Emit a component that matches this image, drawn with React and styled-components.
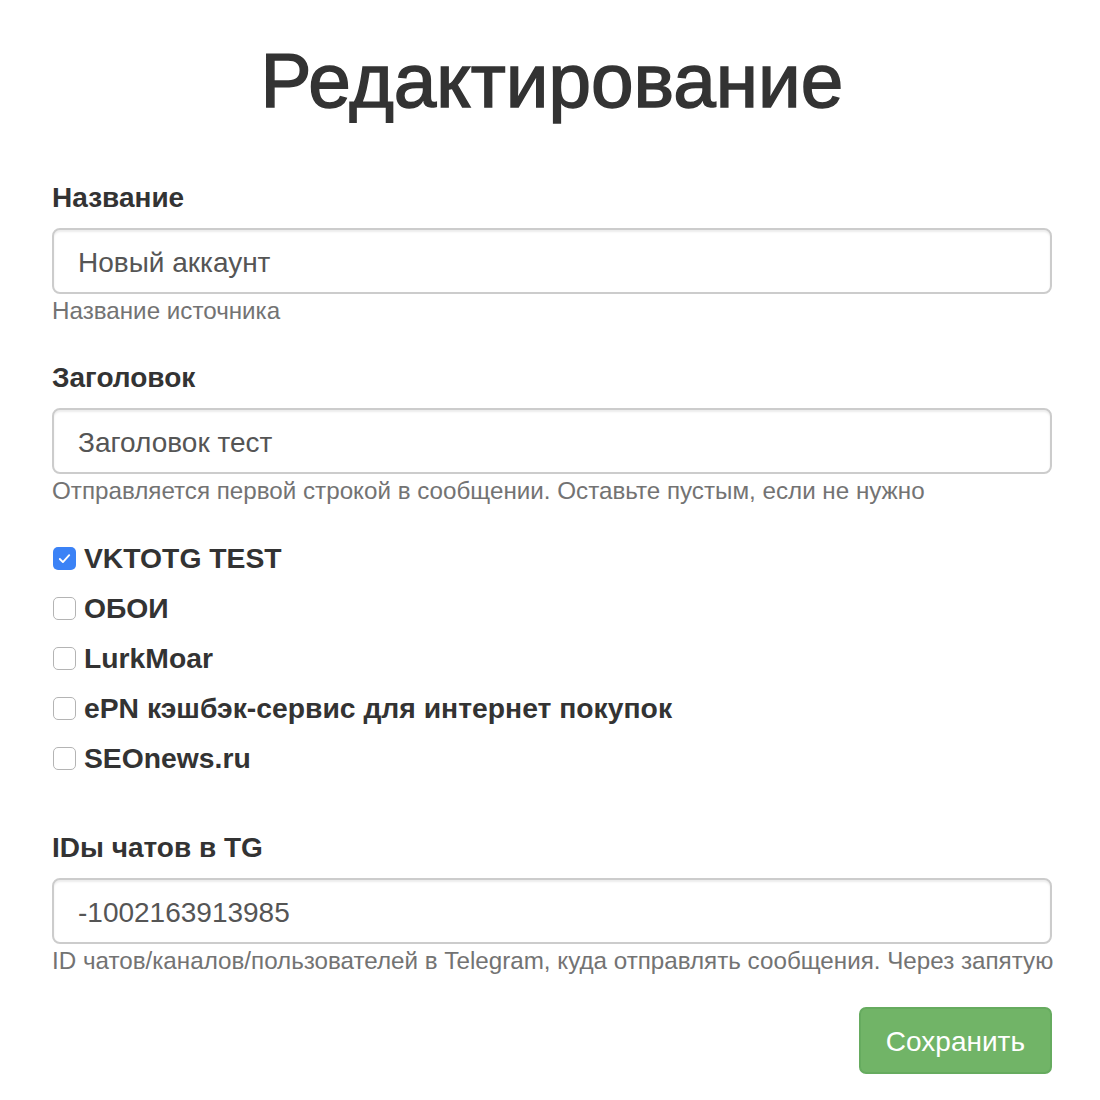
import React from 'react';
import styled, { createGlobalStyle } from 'styled-components';

const GlobalStyle = createGlobalStyle`
  body {
    margin: 0;
    background: #fff;
    font-family: "Liberation Sans", Arial, sans-serif;
    color: #333;
  }
`;

const Page = styled.div`
  width: 1000px;
  padding: 41px 0 24px 52px;
`;

const Title = styled.h1`
  margin: 0 0 58px;
  font-size: 76.5px;
  line-height: 79px;
  font-weight: 400;
  -webkit-text-stroke: 1.5px #333;
  text-align: center;
  color: #333;
`;

const FormGroup = styled.div`
  margin-bottom: ${props => props.mb || 32}px;
`;

const Label = styled.label`
  display: block;
  margin-bottom: 10px;
  font-size: 28px;
  line-height: 40px;
  font-weight: 700;
`;

const Input = styled.input`
  display: block;
  box-sizing: border-box;
  width: 1000px;
  height: 66px;
  padding: 4px 24px 0;
  border: 2px solid #ccc;
  border-radius: 8px;
  box-shadow: inset 0 2px 2px rgba(0, 0, 0, 0.075);
  font-family: inherit;
  font-size: 28px;
  color: #555;
  outline: none;
`;

const Help = styled.div`
  margin-top: 2px;
  font-size: 24.2px;
  line-height: 30px;
  color: #737373;
  white-space: nowrap;
`;

const CheckList = styled.div`
  display: flex;
  flex-direction: column;
  margin-bottom: 45px;
`;

const CheckRow = styled.label`
  display: flex;
  align-items: center;
  gap: 8px;
  height: 50px;
  font-size: 28.3px;
  font-weight: 700;
  cursor: pointer;
`;

const Box = styled.span`
  display: flex;
  align-items: center;
  justify-content: center;
  box-sizing: border-box;
  width: 23px;
  height: 23px;
  margin-left: 1px;
  border-radius: 5px;
  border: ${props => (props.checked ? 'none' : '1.5px solid #b4b4b4')};
  background: ${props => (props.checked ? '#3b82f6' : '#fff')};
`;

const Actions = styled.div`
  display: flex;
  justify-content: flex-end;
`;

const Button = styled.button`
  height: 67px;
  padding: 2px 25px 0;
  border: 2px solid #66ab5f;
  border-radius: 7px;
  background: #71b467;
  color: #fff;
  font-family: inherit;
  font-size: 28px;
  cursor: pointer;
`;

const sources = [
  { name: 'VKTOTG TEST', checked: true },
  { name: 'ОБОИ' },
  { name: 'LurkMoar' },
  { name: 'ePN кэшбэк-сервис для интернет покупок' },
  { name: 'SEOnews.ru' },
];

const Check = ({ checked }) => (
  <Box checked={checked}>
    {checked && (
      <svg width="15" height="15" viewBox="0 0 16 16">
        <path d="M3 8.5l3.3 3.3L13 4.5" fill="none" stroke="#fff" strokeWidth="2" strokeLinecap="round" strokeLinejoin="round" />
      </svg>
    )}
  </Box>
);

export default function App() {
  return (
    <Page>
      <GlobalStyle />
      <Title>Редактирование</Title>
      <FormGroup>
        <Label>Название</Label>
        <Input defaultValue="Новый аккаунт" />
        <Help>Название источника</Help>
      </FormGroup>
      <FormGroup mb={27}>
        <Label>Заголовок</Label>
        <Input defaultValue="Заголовок тест" />
        <Help>Отправляется первой строкой в сообщении. Оставьте пустым, если не нужно</Help>
      </FormGroup>
      <CheckList>
        {sources.map(s => (
          <CheckRow key={s.name}>
            <Check checked={s.checked} />
            {s.name}
          </CheckRow>
        ))}
      </CheckList>
      <FormGroup mb={31}>
        <Label>IDы чатов в TG</Label>
        <Input defaultValue="-1002163913985" />
        <Help>ID чатов/каналов/пользователей в Telegram, куда отправлять сообщения. Через запятую</Help>
      </FormGroup>
      <Actions>
        <Button>Сохранить</Button>
      </Actions>
    </Page>
  );
}
